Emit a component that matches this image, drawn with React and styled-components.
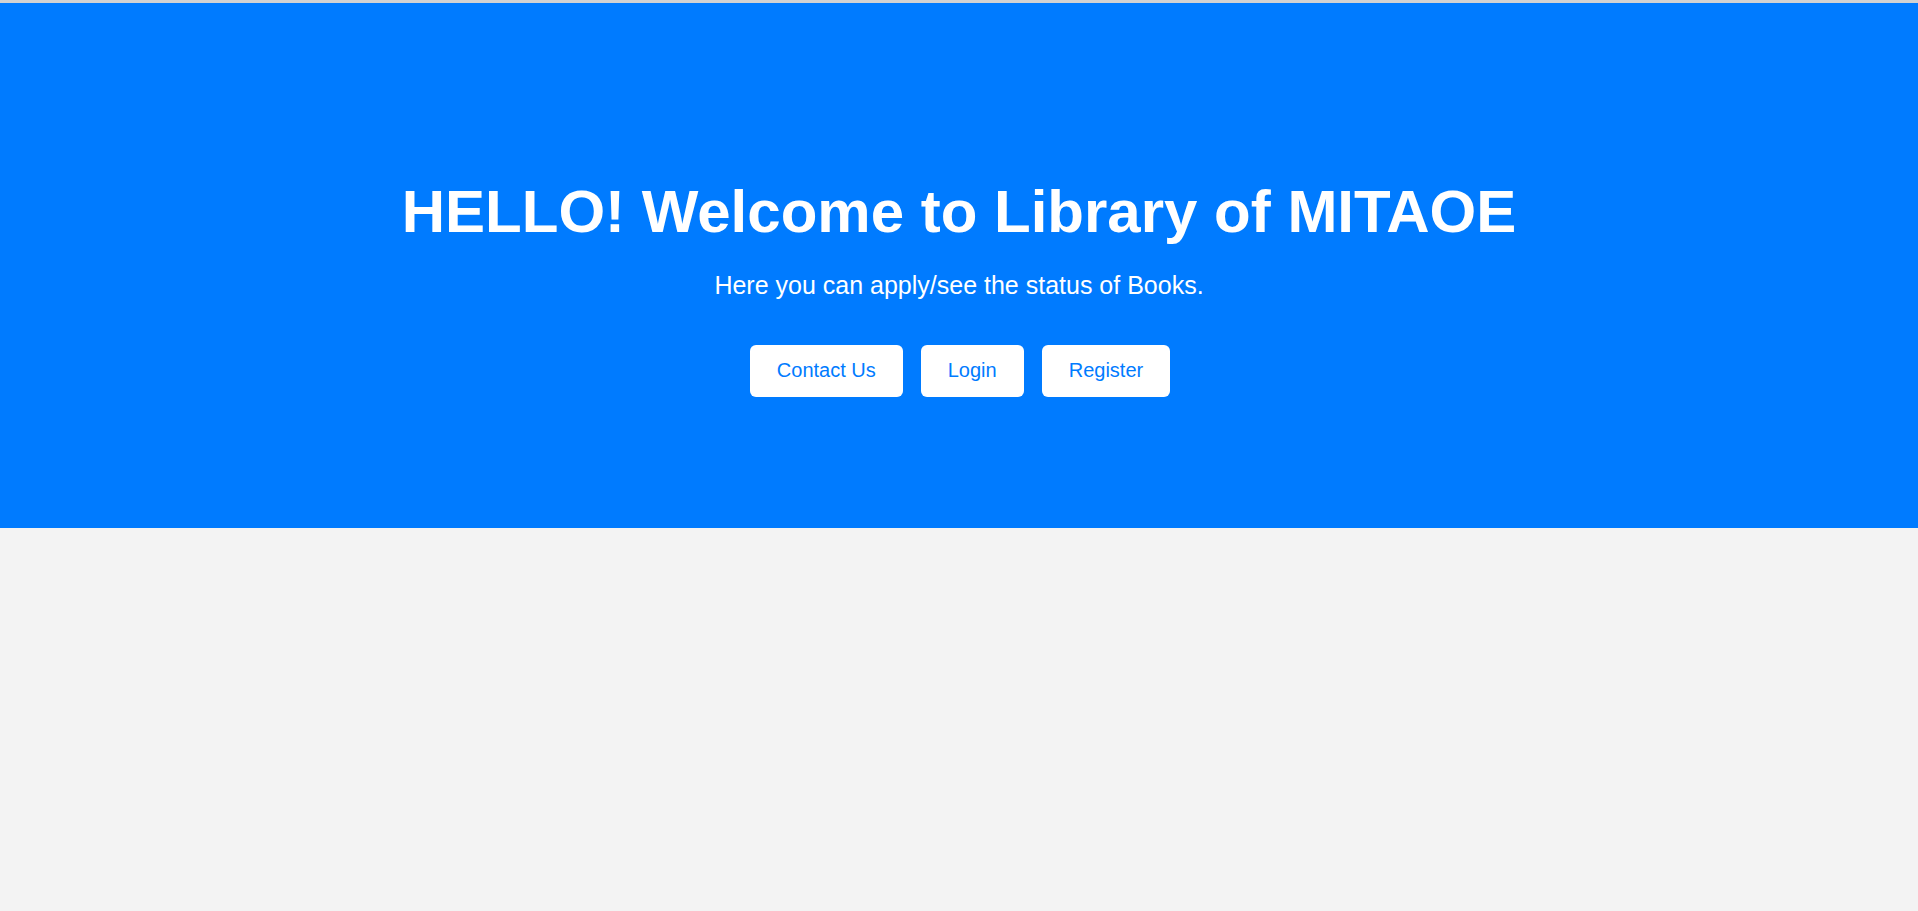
import React from 'react';
import styled, { createGlobalStyle } from 'styled-components';

const GlobalStyle = createGlobalStyle`
  html, body {
    margin: 0;
    padding: 0;
    background: #f3f3f3;
    font-family: "Liberation Sans", Arial, sans-serif;
  }
`;

const Page = styled.div`
  min-height: 911px;
  border-top: 3px solid #d2d2d2;
  box-sizing: border-box;
`;

const Hero = styled.header`
  background: #007bff;
  color: #fff;
  height: 525px;
  box-sizing: border-box;
  padding-top: 174px;
  display: flex;
  flex-direction: column;
  align-items: center;
  text-align: center;
`;

const Title = styled.h1`
  margin: 0;
  font-size: 60px;
  line-height: 1.15;
  font-weight: 700;
`;

const Subtitle = styled.p`
  margin: 25px 0 0;
  font-size: 25px;
  line-height: 1.15;
`;

const Actions = styled.div`
  display: flex;
  gap: 18px;
  margin-top: 45px;
  margin-left: 2px;
`;

const Button = styled.a`
  display: flex;
  align-items: center;
  justify-content: center;
  height: 52px;
  padding: 0 27px;
  box-sizing: border-box;
  background: #fff;
  color: #007bff;
  font-size: 20px;
  border-radius: 6px;
  text-decoration: none;
  cursor: pointer;
`;

const App = () => (
  <>
    <GlobalStyle />
    <Page>
      <Hero>
        <Title>HELLO! Welcome to Library of MITAOE</Title>
        <Subtitle>Here you can apply/see the status of Books.</Subtitle>
        <Actions>
          <Button href="#contact">Contact Us</Button>
          <Button href="#login">Login</Button>
          <Button href="#register">Register</Button>
        </Actions>
      </Hero>
    </Page>
  </>
);

export default App;
